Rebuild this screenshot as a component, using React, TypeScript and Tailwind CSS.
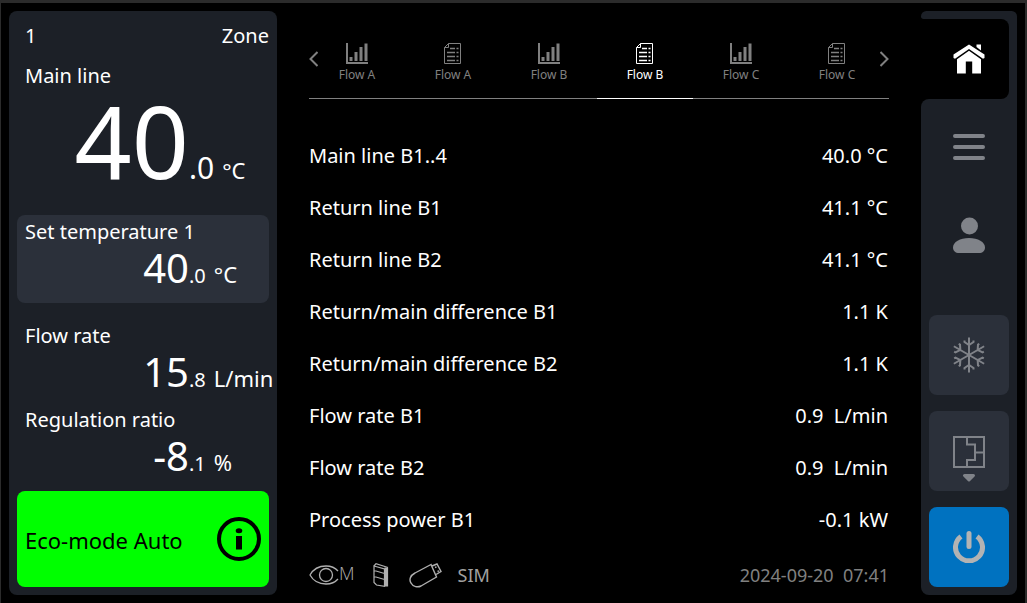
import React, { useState } from 'react';
import clsx from 'clsx';

type IconProps = { className?: string };

const ChartIcon = ({ className }: IconProps) => (
  <svg className={className} width="22" height="21" viewBox="0 0 22 21" fill="currentColor" aria-hidden="true">
    <path d="M0 0h2v19h20v2H0z" />
    <path d="M3.5 14h3v4h-3zM8.5 9h3v9h-3zM13.5 4h3v14h-3zM18.5 0.5h3V18h-3z" />
  </svg>
);

const ListIcon = ({ className }: IconProps) => (
  <svg className={className} width="18" height="21" viewBox="0 0 18 21" fill="none" stroke="currentColor" aria-hidden="true">
    <path d="M4.5 0.5H16.5V20.5H0.5V4.5zM4.5 0.5V4.5H0.5" />
    <path d="M6 5.5h5M3 9.5h8M3 13.5h8M3 17.5h8" strokeWidth="1.3" />
    <path d="M12.5 5.5h2M12.5 9.5h2M12.5 13.5h2M12.5 17.5h2" strokeWidth="1.3" />
  </svg>
);

const HomeIcon = () => (
  <svg width="32" height="30" viewBox="0 0 32 30" fill="currentColor" aria-hidden="true">
    <path d="M23.5 0.5H28V6.5L23.5 3z" />
    <path d="M16 0.5L0.5 10.5V14L2 14.8L16 5L30 14.8L31.5 14V10.5z" />
    <path d="M16 6.8L4 15.2V29.5H12.8V17.5H19.2V29.5H28V15.2z" />
  </svg>
);

const MenuIcon = () => (
  <svg width="32" height="26" viewBox="0 0 32 26" stroke="currentColor" strokeWidth="4" strokeLinecap="round" aria-hidden="true">
    <path d="M2 2h28M2 13h28M2 24h28" />
  </svg>
);

const UserIcon = () => (
  <svg width="32" height="36" viewBox="0 0 32 36" fill="currentColor" aria-hidden="true">
    <circle cx="16.5" cy="9" r="8.5" />
    <path d="M16 21C7 21 0 25 0 30.5C0 34 2.5 36 6 36H26C29.5 36 32 34 32 30.5C32 25 25 21 16 21z" />
  </svg>
);

const SnowflakeIcon = () => (
  <svg width="36" height="36" viewBox="-18 -18 36 36" fill="none" stroke="currentColor" strokeWidth="2" aria-hidden="true">
    {[0, 60, 120, 180, 240, 300].map((angle) => (
      <path key={angle} transform={`rotate(${angle})`} d="M0 0V-17.5M-4.5 -14.5V-13L0 -10L4.500 -13V-14.5" />
    ))}
  </svg>
);

const MoldIcon = () => (
  <svg width="32" height="46" viewBox="0 0 32 46" fill="none" stroke="currentColor" strokeWidth="2" aria-hidden="true">
    <path d="M1 1H31V31H1zM14 1V8.500H22V24H14V31M22 16.5H31" />
    <path d="M11.5 39.5H20.5L16 44z" fill="currentColor" strokeLinejoin="round" strokeWidth="3" />
  </svg>
);

const PowerIcon = () => (
  <svg width="32" height="32" viewBox="0 0 32 32" fill="none" stroke="currentColor" strokeWidth="5" aria-hidden="true">
    <path d="M8 5.500A13.500 13.500 0 1 0 24 5.500" />
    <path d="M16 2.500V15.500" strokeLinecap="round" />
  </svg>
);

const InfoIcon = () => (
  <svg width="44" height="44" viewBox="0 0 44 44" aria-hidden="true">
    <circle cx="22" cy="22" r="20" fill="none" stroke="currentColor" strokeWidth="4" />
    <ellipse cx="22" cy="13.7" rx="3.3" ry="2.5" fill="currentColor" />
    <path d="M19 19h6v13.5h-6z" fill="currentColor" />
  </svg>
);

const EyeIcon = () => (
  <svg width="30" height="20" viewBox="0 0 30 20" fill="none" stroke="currentColor" strokeWidth="1.300" aria-hidden="true">
    <path d="M29 14C26 17.500 21.500 19 17 19C9 19 3.500 14.500 1 10C3.500 5.500 9 1 17 1C21.500 1 26 2.500 29 6" />
    <circle cx="17" cy="10" r="6.500" />
  </svg>
);

const CabinetIcon = () => (
  <svg width="16" height="24" viewBox="0 0 16 24" fill="none" stroke="currentColor" strokeWidth="1.200" aria-hidden="true">
    <path d="M1 3L3 0.700L15 4.500M1 3L11.500 6V23.300L3.500 22L1 19.500zM1 3V19.500M1 8H3L11.500 10.500M1 14H3L11.500 16.500" />
    <path d="M12 5h2.500v18h-2.500z" fill="currentColor" />
  </svg>
);

const UsbIcon = () => (
  <svg width="33" height="25" viewBox="0 0 33 25" fill="none" stroke="currentColor" strokeWidth="1.400" aria-hidden="true">
    <path d="M22 1.500L6 10C1 12.500 0 17 2 20C4 24 9 24.500 12 23L27.500 14z" />
    <path d="M23 3L28 1L32 8.500L27 11.500M26 4.500l1.500-0.700M28.500 8.500l1.500-0.700" />
  </svg>
);

const tabs = [
  { name: 'Flow A', icon: ChartIcon },
  { name: 'Flow A', icon: ListIcon },
  { name: 'Flow B', icon: ChartIcon },
  { name: 'Flow B', icon: ListIcon },
  { name: 'Flow C', icon: ChartIcon },
  { name: 'Flow C', icon: ListIcon },
];

const rows = [
  { label: 'Main line B1..4', value: '40.0', unit: '°C' },
  { label: 'Return line B1', value: '41.1', unit: '°C' },
  { label: 'Return line B2', value: '41.1', unit: '°C' },
  { label: 'Return/main difference B1', value: '1.1', unit: 'K' },
  { label: 'Return/main difference B2', value: '1.1', unit: 'K' },
  { label: 'Flow rate B1', value: '0.9 ', unit: 'L/min' },
  { label: 'Flow rate B2', value: '0.9 ', unit: 'L/min' },
  { label: 'Process power B1', value: '-0.1', unit: 'kW' },
];

type ReadingProps = { whole: string; decimal: string; unit: string; large?: boolean };

const Reading = ({ whole, decimal, unit, large }: ReadingProps) => (
  <div className="flex items-baseline whitespace-nowrap">
    <span className={clsx('w-43 shrink-0 text-right', large ? 'text-[100px] leading-[88px]' : 'text-[40px] leading-[38px]')}>{whole}</span>
    <span className={large ? 'text-3xl leading-none' : 'text-xl leading-none'}>{decimal}</span>
    <span className="ml-2 text-[22px] leading-none">{unit}</span>
  </div>
);

const StatusPanel = () => (
  <aside className="flex w-67 shrink-0 flex-col rounded-lg bg-[#1c2027] px-2 pt-[5px] pb-2">
    <div className="flex h-10 items-center justify-between pl-2">
      <span>1</span>
      <span>Zone</span>
    </div>
    <h2 className="flex h-10 items-center pl-2">Main line</h2>
    <Reading whole="40" decimal=".0" unit="°C" large />

    <div className="mt-auto">
      <button className="flex h-22 w-full flex-col items-start justify-start rounded-lg bg-[#2b303a] text-left">
        <span className="pl-2 leading-[34px]">Set temperature 1</span>
        <Reading whole="40" decimal=".0" unit="°C" />
      </button>
      <div className="mt-4 h-21">
        <h2 className="pl-2 leading-[34px]">Flow rate</h2>
        <Reading whole="15" decimal=".8" unit="L/min" />
      </div>
      <div className="h-22">
        <h2 className="pl-2 leading-[34px]">Regulation ratio</h2>
        <Reading whole="-8" decimal=".1" unit="%" />
      </div>
      <button className="flex h-24 w-full items-center justify-between rounded-lg bg-[#00ff00] px-2 text-[22px] text-black">
        <span className="pt-0.5">Eco-mode Auto</span>
        <InfoIcon />
      </button>
    </div>
  </aside>
);

const Tabs = () => {
  const [active, setActive] = useState(3);

  return (
    <div className="relative border-b border-[#808080]">
      <div className="flex pr-1" role="tablist">
        {tabs.map(({ name, icon: Icon }, index) => (
          <button
            key={index}
            role="tab"
            aria-selected={index === active}
            onClick={() => setActive(index)}
            className={clsx(
              '-mb-px flex h-22 flex-1 flex-col items-center border-b pt-8 text-xs',
              index === active ? 'border-white text-white' : 'border-transparent text-[#808080]'
            )}
          >
            <Icon />
            <span className="mt-[3px]">{name}</span>
          </button>
        ))}
      </div>
      <button aria-label="Previous" className="absolute top-10 left-0 text-[#808080]" onClick={() => setActive(Math.max(0, active - 1))}>
        <svg width="9" height="16" viewBox="0 0 9 16" fill="none" stroke="currentColor" strokeWidth="2">
          <path d="M8.500 1L1.500 8L8.500 15" />
        </svg>
      </button>
      <button aria-label="Next" className="absolute top-10 right-0 text-[#808080]" onClick={() => setActive(Math.min(tabs.length - 1, active + 1))}>
        <svg width="9" height="16" viewBox="0 0 9 16" fill="none" stroke="currentColor" strokeWidth="2">
          <path d="M0.500 1L7.500 8L0.500 15" />
        </svg>
      </button>
    </div>
  );
};

const Readings = () => (
  <main className="flex flex-1 flex-col px-8">
    <Tabs />
    <table className="mt-[31px] w-full">
      <tbody>
        {rows.map(({ label, value, unit }) => (
          <tr key={label} className="h-13">
            <th scope="row" className="text-left font-normal">{label}</th>
            <td className="pr-px text-right whitespace-pre">{value} {unit}</td>
          </tr>
        ))}
      </tbody>
    </table>
    <footer className="mt-auto flex h-10 items-center text-lg text-[#808080]">
      <div className="flex items-center text-[#b0b0b0]">
        <EyeIcon />
        <span className="pb-1 font-['Open_Sans'] font-light">M</span>
      </div>
      <div className="ml-[18px] flex items-center gap-5 text-[#b0b0b0]">
        <CabinetIcon />
        <UsbIcon />
      </div>
      <span className="ml-4 text-[#a0a0a0]">SIM</span>
      <time className="ml-auto whitespace-pre" dateTime="2024-09-20T07:41">2024-09-20  07:41</time>
    </footer>
  </main>
);

const navButton = 'flex h-20 w-20 items-center justify-center rounded-lg';

const SideNav = () => (
  <nav className="flex w-24 shrink-0 flex-col text-[#808389]">
    <div className="h-2 rounded-l-sm rounded-tl-lg rounded-tr-lg bg-[#1c2027]" />
    <button aria-label="Home" className="h-20 bg-[#1c2027] pr-2 text-white">
      <span className="flex h-full items-center justify-center rounded-r-lg bg-black pl-2">
        <HomeIcon />
      </span>
    </button>
    <div className="flex flex-1 flex-col items-center rounded-b-lg rounded-tl-lg bg-[#1c2027] py-2">
      <button aria-label="Menu" className={navButton}><MenuIcon /></button>
      <button aria-label="User" className={clsx(navButton, 'mt-2')}><UserIcon /></button>
      <div className="mt-auto flex flex-col gap-4">
        <button aria-label="Cooling" className={clsx(navButton, 'bg-[#2b303a]')}><SnowflakeIcon /></button>
        <button aria-label="Mold evacuation" className={clsx(navButton, 'bg-[#2b303a] pt-4')}><MoldIcon /></button>
        <button aria-label="Power" className={clsx(navButton, 'bg-[#0072c0] text-[#b3b3b3]')}><PowerIcon /></button>
      </div>
    </div>
  </nav>
);

const App = () => (
  <div className="flex min-h-screen border-t-3 border-r-2 border-l border-[#2b2b2b] bg-black p-2 font-['Noto_Sans',sans-serif] text-xl text-white">
    <StatusPanel />
    <Readings />
    <SideNav />
  </div>
);

export default App;
